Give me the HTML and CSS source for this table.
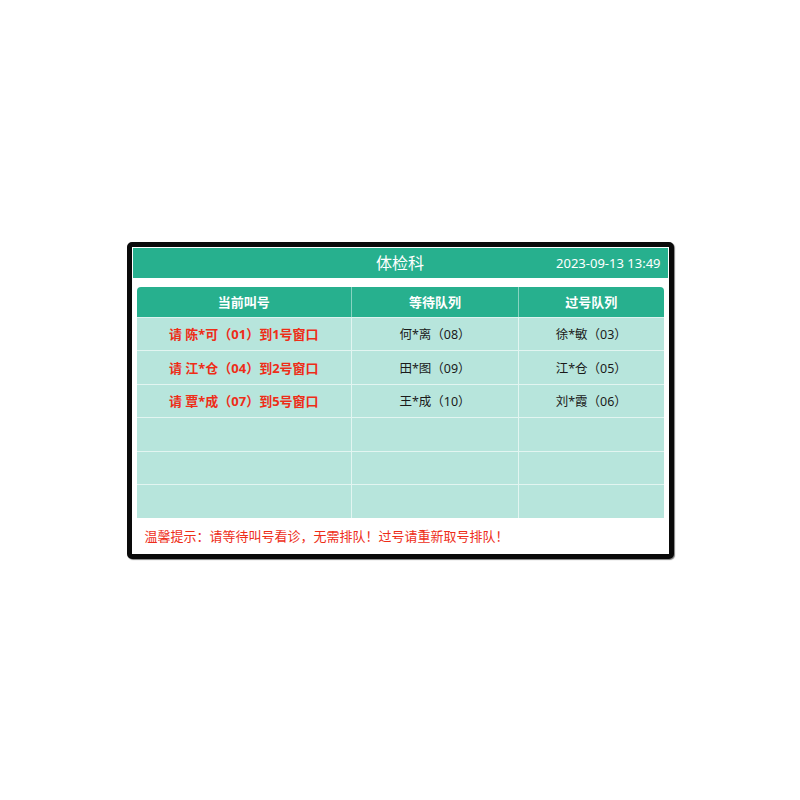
FILE: index.html
```html
<!DOCTYPE html>
<html lang="zh-CN">
<head>
<meta charset="utf-8">
<title>体检科</title>
<link rel="stylesheet" href="styles.css">
</head>
<body>
<div class="stage">
  <div class="screen">
    <div class="topbar">
      <div class="title">体检科</div>
      <div class="clock">2023-09-13 13:49</div>
    </div>
    <div class="board">
      <table class="queue">
        <colgroup>
          <col class="c1"><col class="c2"><col class="c3">
        </colgroup>
        <thead>
          <tr><th>当前叫号</th><th>等待队列</th><th>过号队列</th></tr>
        </thead>
        <tbody>
          <tr><td class="call">请 陈*可（01）到1号窗口</td><td>何*离（08）</td><td>徐*敏（03）</td></tr>
          <tr><td class="call">请 江*仓（04）到2号窗口</td><td>田*图（09）</td><td>江*仓（05）</td></tr>
          <tr><td class="call">请 覃*成（07）到5号窗口</td><td>王*成（10）</td><td>刘*霞（06）</td></tr>
          <tr><td></td><td></td><td></td></tr>
          <tr><td></td><td></td><td></td></tr>
          <tr><td></td><td></td><td></td></tr>
        </tbody>
      </table>
    </div>
    <div class="notice">温馨提示：请等待叫号看诊，无需排队！过号请重新取号排队！</div>
  </div>
</div>
</body>
</html>
```

FILE: styles.css
```css
html, body {
  margin: 0;
  padding: 0;
  background: #ffffff;
  font-family: "Noto Sans", "Noto Sans CJK SC", sans-serif;
}

.stage {
  width: 800px;
  height: 800px;
  display: flex;
  align-items: center;
  justify-content: center;
}

.screen {
  width: 535px;
  height: 305px;
  border: 5px solid #0a0a0a;
  border-radius: 5px;
  background: #ffffff;
  padding: 1px;
  box-sizing: content-box;
  display: flex;
  flex-direction: column;
  box-shadow: 1px 1px 1px rgba(0,0,0,0.5);
}

.topbar {
  height: 30px;
  flex: none;
  background: #27b08e;
  display: flex;
  align-items: center;
  justify-content: center;
  position: relative;
  color: #ffffff;
}

.title {
  font-size: 16px;
  line-height: 30px;
}

.clock {
  position: absolute;
  right: 7px;
  top: 0;
  font-size: 13px;
  line-height: 30px;
}

.board {
  margin: 9px 4px 0 4px;
  border-radius: 4px 4px 0 0;
  overflow: hidden;
  flex: none;
}

.queue {
  width: 100%;
  border-collapse: collapse;
  table-layout: fixed;
}

.c1 { width: 215px; }
.c2 { width: 167px; }
.c3 { width: auto; }

.queue th {
  height: 30px;
  background: #27b08e;
  color: #ffffff;
  font-size: 13px;
  font-weight: 700;
  border-left: 1px solid rgba(255,255,255,0.45);
  border-bottom: 1px solid rgba(255,255,255,0.55);
  padding: 0;
}

.queue td {
  height: 32.5px;
  background: #b7e5dc;
  color: #1a1a1a;
  font-size: 12.5px;
  text-align: center;
  border-left: 1px solid rgba(255,255,255,0.6);
  border-top: 1px solid rgba(255,255,255,0.6);
  padding: 0;
}

.queue th:first-child,
.queue td:first-child {
  border-left: none;
}

.queue tbody tr:first-child td {
  border-top: none;
}

.queue td.call {
  color: #ee2d18;
  font-weight: 700;
  font-size: 13px;
}

.notice {
  flex: 1;
  display: flex;
  align-items: center;
  padding-left: 12px;
  color: #ee2d18;
  font-size: 13px;
}
```
